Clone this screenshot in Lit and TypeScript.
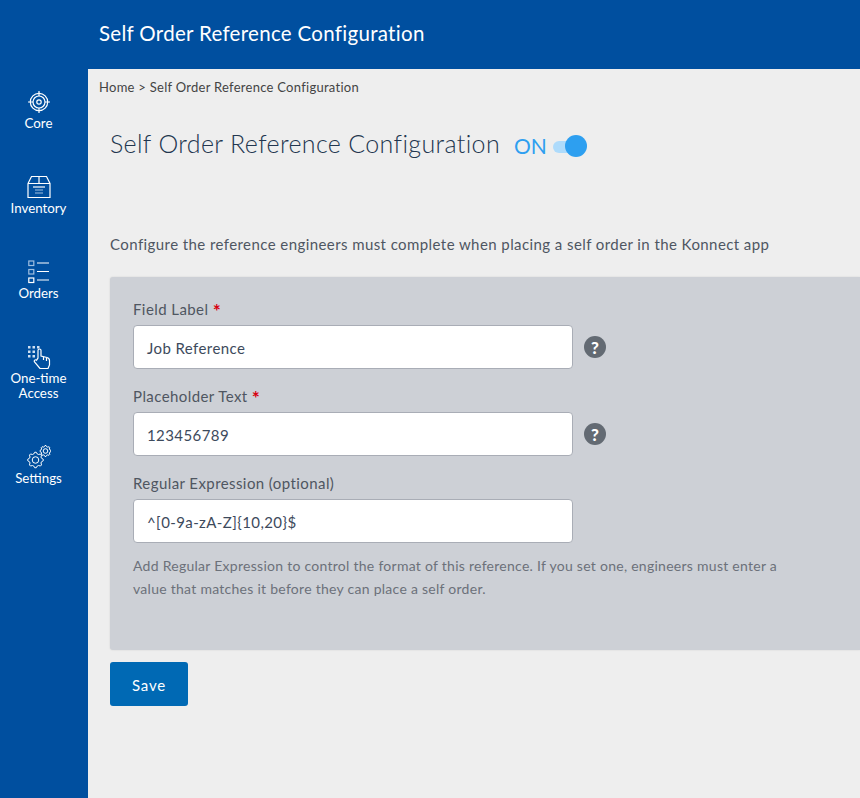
import { LitElement, html, css, svg } from 'lit';
import { customElement } from 'lit/decorators.js';

const gear = (cx: number, cy: number, r: number, teeth: number) => {
  const pts: string[] = [];
  const n = teeth * 4;
  for (let i = 0; i < n; i++) {
    const a = ((i - 0.5) / n) * Math.PI * 2;
    const rad = i % 4 < 2 ? r : r * 0.8;
    pts.push(`${(cx + Math.cos(a) * rad).toFixed(2)},${(cy + Math.sin(a) * rad).toFixed(2)}`);
  }
  return svg`<polygon points="${pts.join(' ')}" /><circle cx="${cx}" cy="${cy}" r="${r * 0.42}" />`;
};

const icons = {
  core: svg`<svg class="icon" width="24" height="24" viewBox="0 0 24 24">
    <circle cx="12" cy="12" r="8.700" /><circle cx="12" cy="12" r="6" /><circle cx="12" cy="12" r="2.200" />
    <path d="M12 1v5M12 18v5M1 12h5M18 12h5" /></svg>`,
  inventory: svg`<svg class="icon" width="24" height="24" viewBox="0 0 24 24">
    <path d="M1 8.500 4.500 1.500h15L23 8.500v14H1zM1 8.500h22M12 1.500v7" />
    <path d="M6 12h12" /><path class="dim" d="M8 15h8M8 18h8" /></svg>`,
  orders: svg`<svg class="icon" width="22" height="24" viewBox="0 0 22 24">
    <rect class="dim" x="0.800" y="1" width="5" height="4.500" /><rect class="dim" x="0.800" y="9.500" width="5" height="4.500" />
    <rect x="0.800" y="18" width="5" height="4.500" />
    <path d="M9 3h12M9 11.500h12M9 20h12" /></svg>`,
  access: svg`<svg class="icon" width="24" height="24" viewBox="0 0 24 24">
    <g class="dots"><rect x="1" y="1" width="2.500" height="2.500" /><rect x="5.500" y="1" width="2.500" height="2.500" /><rect x="10" y="1" width="2.500" height="2.500" />
    <rect x="1" y="5.500" width="2.500" height="2.500" /><rect x="5.500" y="5.500" width="2.500" height="2.500" /><rect x="1" y="10" width="2.500" height="2.500" /><rect x="5.500" y="10" width="2.500" height="2.500" /></g>
    <path d="M11 13V5.500a1.500 1.500 0 0 1 3 0V11l6 1.500c1.500.4 2.500 1.500 2.500 3V20l-1.500 3.500h-8L7.500 17c-.9-1.500.9-2.900 2-1.800z" />
    <path d="M16.500 12v3M19.500 13v3" /></svg>`,
  settings: svg`<svg class="icon thin" width="24" height="24" viewBox="0 0 24 24">${gear(8.500, 15, 7.800, 8)}${gear(18.500, 6, 5.500, 8)}</svg>`,
};

const navItems = [
  { label: 'Core', icon: icons.core },
  { label: 'Inventory', icon: icons.inventory },
  { label: 'Orders', icon: icons.orders },
  { label: 'One-time Access', icon: icons.access },
  { label: 'Settings', icon: icons.settings },
];

const fields = [
  { label: 'Field Label', value: 'Job Reference', required: true, help: true },
  { label: 'Placeholder Text', value: '123456789', required: true, help: true },
  { label: 'Regular Expression (optional)', value: '^[0-9a-zA-Z]{10,20}$', required: false, help: false },
];

@customElement('app-root')
export class AppRoot extends LitElement {
  static styles = css`
    :host {
      display: block;
      height: 798px;
      overflow: hidden;
      background: #eeeeee;
      font-family: Lato, 'Open Sans', sans-serif;
      color: #3d4a5c;
    }
    .topbar {
      height: 69px;
      background: #004f9f;
      color: #fff;
      display: flex;
      align-items: center;
      padding: 0 0 3px 99px;
      box-sizing: border-box;
      font-size: 20.500px;
      letter-spacing: 0.3px;
    }
    .body {
      display: flex;
      height: 729px;
    }
    .sidebar {
      width: 88px;
      flex: none;
      box-sizing: border-box;
      padding: 21px 11px 0 0;
      background: #004f9f;
      color: #fff;
      display: flex;
      flex-direction: column;
      align-items: center;
      gap: 44px;
    }
    .nav-item {
      width: 77px;
      display: flex;
      flex-direction: column;
      align-items: center;
      font-size: 13.300px;
      line-height: 15px;
      text-align: center;
    }
    .nav-item span {
      width: 70px;
      margin-top: 2px;
    }
    .icon {
      display: block;
      fill: none;
      stroke: #fff;
      stroke-width: 1.200;
    }
    .icon.thin {
      stroke-width: 1;
    }
    .icon .dim {
      stroke: #9fbfe0;
    }
    .icon .dots rect {
      fill: #cfe0f2;
      stroke: none;
    }
    .main {
      flex: 1;
      min-width: 0;
    }
    .crumbs {
      padding: 10px 0 0 11px;
      font-size: 13px;
      line-height: 16px;
      color: #444;
      letter-spacing: 0.27px;
    }
    .content {
      width: 772px;
      padding: 0 0 0 22px;
      box-sizing: border-box;
    }
    .title-row {
      display: flex;
      align-items: center;
      margin-top: 32px;
      height: 38px;
    }
    h1 {
      margin: 0;
      padding-bottom: 6px;
      font-size: 25px;
      font-weight: 300;
      letter-spacing: 0.35px;
      color: #22364f;
    }
    .state {
      margin-left: 14px;
      padding-bottom: 2px;
      font-size: 21px;
      font-weight: 400;
      color: #2f9ff0;
    }
    .toggle {
      position: relative;
      margin-left: 6px;
      width: 34px;
      height: 22px;
    }
    .track {
      margin-top: 6px;
      width: 24px;
      height: 12px;
      border-radius: 6px;
      background: #aedbfb;
      display: block;
    }
    .knob {
      position: absolute;
      right: 0;
      top: 0;
      width: 22px;
      height: 22px;
      border-radius: 50%;
      background: #2d9ff0;
    }
    .intro {
      margin: 70px 0 0;
      font-size: 15px;
      line-height: 18px;
      letter-spacing: 0.42px;
      color: #4e5662;
    }
    .panel {
      margin-top: 24px;
      height: 373px;
      background: #cdd0d6;
      border-radius: 3px 0 0 3px;
      box-shadow: 0 0 2px rgba(0, 0, 0, 0.12);
      padding: 22px 0 0 23px;
      box-sizing: border-box;
    }
    .field-label {
      height: 20px;
      font-size: 15px;
      line-height: 20px;
      letter-spacing: 0.42px;
      color: #4f5661;
    }
    .req {
      color: #d8000f;
      font-size: 19px;
      line-height: 1;
      font-weight: 700;
      vertical-align: -3px;
    }
    .field {
      margin-bottom: 17px;
    }
    .field-row {
      display: flex;
      align-items: center;
      margin-top: 6px;
    }
    .input {
      width: 440px;
      height: 44px;
      box-sizing: border-box;
      background: #fff;
      border: 1px solid #a9adb6;
      border-radius: 4px;
      padding: 2px 13px 0;
      display: flex;
      align-items: center;
      font-size: 15px;
      letter-spacing: 0.42px;
      color: #3d4a5c;
    }
    .help {
      margin-left: 11px;
      width: 22px;
      height: 22px;
      border-radius: 50%;
      background: #636a73;
      color: #fff;
      font-size: 17px;
      font-weight: 900;
      display: flex;
      align-items: center;
      justify-content: center;
    }
    .hint {
      margin: -6px 0 0;
      width: 660px;
      font-size: 14px;
      line-height: 23px;
      letter-spacing: 0.27px;
      color: #6c717a;
    }
    .save {
      display: block;
      margin-top: 12px;
      padding-top: 2px;
      width: 78px;
      height: 44px;
      border: 0;
      border-radius: 3px;
      background: #0069b4;
      color: #fff;
      font: inherit;
      font-size: 15px;
      letter-spacing: 0.8px;
    }
  `;

  render() {
    return html`
      <header class="topbar">Self Order Reference Configuration</header>
      <div class="body">
        <nav class="sidebar">
          ${navItems.map(
            (n) => html`<div class="nav-item">${n.icon}<span>${n.label}</span></div>`
          )}
        </nav>
        <main class="main">
          <div class="crumbs">Home &gt; Self Order Reference Configuration</div>
          <div class="content">
            <div class="title-row">
              <h1>Self Order Reference Configuration</h1>
              <span class="state">ON</span>
              <span class="toggle"><span class="track"></span><span class="knob"></span></span>
            </div>
            <p class="intro">
              Configure the reference engineers must complete when placing a self order in the Konnect app
            </p>
            <section class="panel">
              ${fields.map(
                (f) => html`
                  <div class="field">
                    <div class="field-label">
                      ${f.label}${f.required ? html` <span class="req">*</span>` : ''}
                    </div>
                    <div class="field-row">
                      <div class="input">${f.value}</div>
                      ${f.help ? html`<span class="help">?</span>` : ''}
                    </div>
                  </div>
                `
              )}
              <p class="hint">
                Add Regular Expression to control the format of this reference. If you set one, engineers must enter a
                value that matches it before they can place a self order.
              </p>
            </section>
            <button class="save">Save</button>
          </div>
        </main>
      </div>
    `;
  }
}
